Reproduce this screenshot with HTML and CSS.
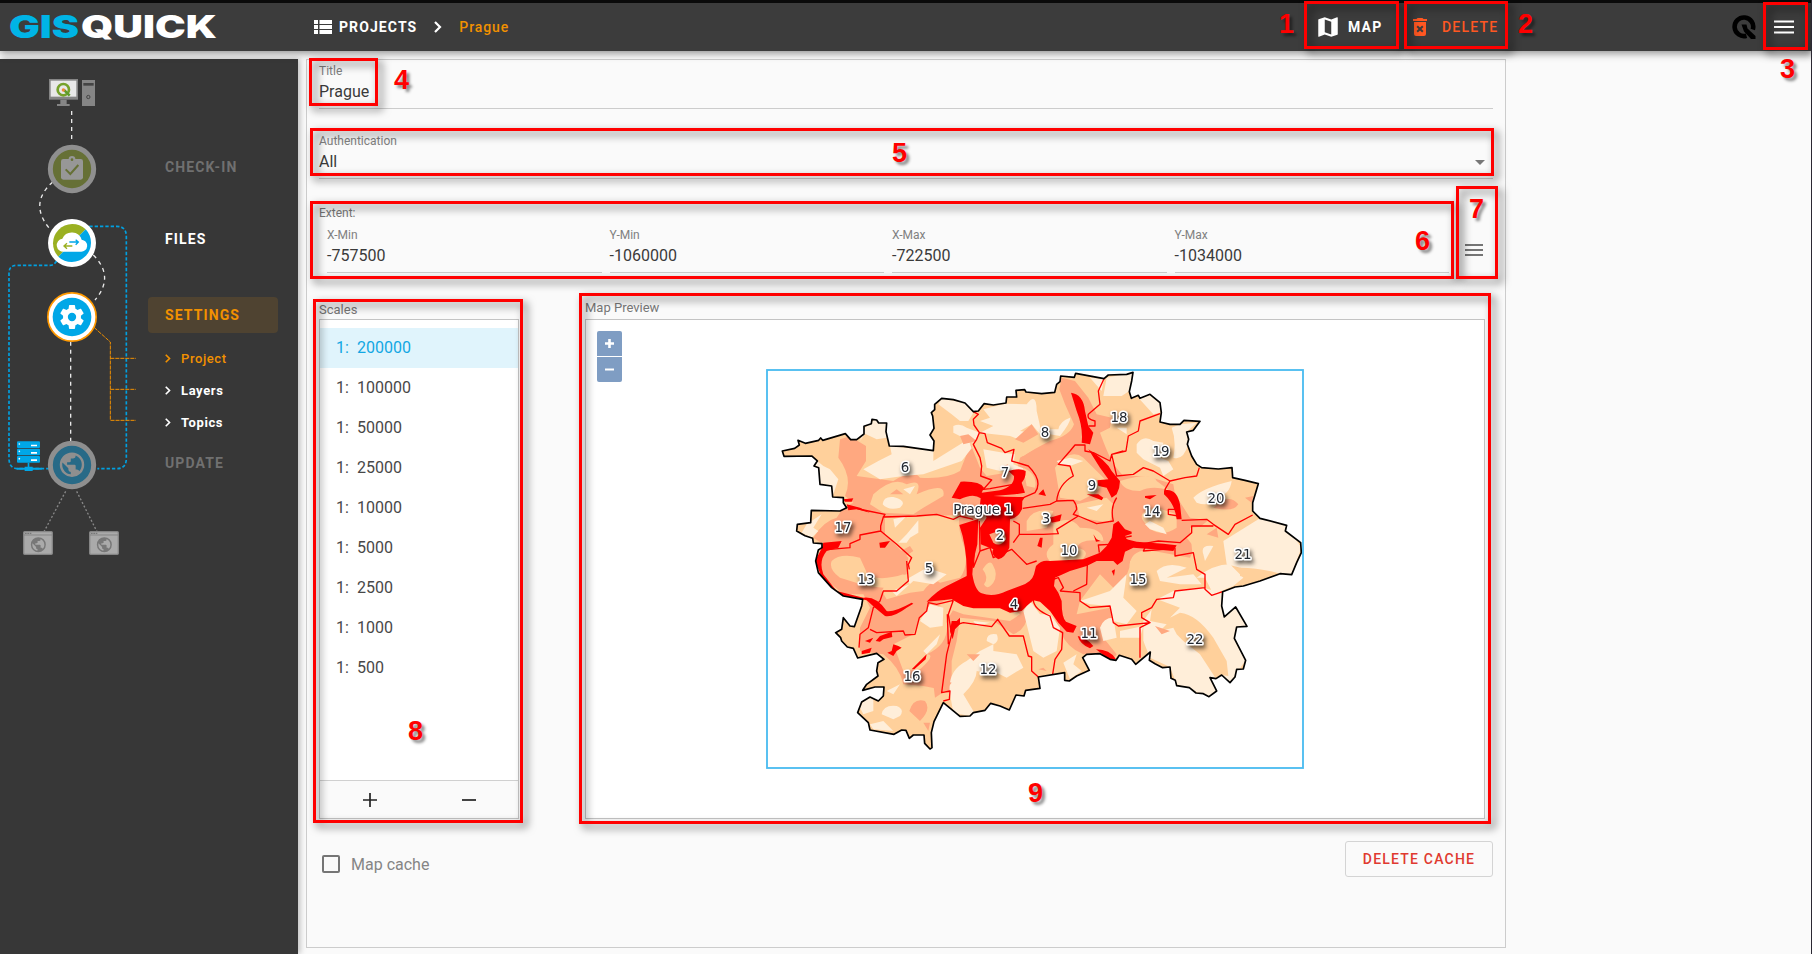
FILE: index.html
```html
<!DOCTYPE html>
<html lang="en">
<head>
<meta charset="utf-8">
<title>Gisquick - Prague</title>
<link rel="stylesheet" href="styles.css">
</head>
<body>
<svg width="0" height="0" class="defs">
  <defs>
    <symbol id="globe" viewBox="0 0 24 24"><path d="M17.9 17.39C17.64 16.59 16.89 16 16 16H15V13A1 1 0 0 0 14 12H8V10H10A1 1 0 0 0 11 9V7H13A2 2 0 0 0 15 5V4.59C17.93 5.77 20 8.64 20 12C20 14.08 19.2 15.97 17.9 17.39M11 19.93C7.05 19.44 4 16.08 4 12C4 11.38 4.08 10.78 4.21 10.21L9 15V16A2 2 0 0 0 11 18M12 2A10 10 0 1 0 12 22A10 10 0 0 0 12 2Z"/></symbol>
    <symbol id="chevron" viewBox="0 0 8 12"><path d="M1 1L6 6L1 11" fill="none" stroke="currentColor" stroke-width="2.2"/></symbol>
  </defs>
</svg>
<header class="topbar">
  <svg class="logo" viewBox="0 0 210 40">
    <text x="-1" y="31" textLength="70" lengthAdjust="spacingAndGlyphs" class="logo-gis">GIS</text>
    <text x="71" y="31" textLength="136" lengthAdjust="spacingAndGlyphs" class="logo-quick">QUICK</text>
  </svg>
  <nav class="crumbs">
    <svg class="list-icon" viewBox="0 0 18 14"><path d="M0 0h4v4H0zM5.500 0H18v4H5.500zM0 5h4v4H0zM5.500 5H18v4H5.500zM0 10h4v4H0zM5.500 10H18v4H5.500z" fill="#fff"/></svg>
    <span class="crumb">PROJECTS</span>
    <svg class="crumb-chev"><use href="#chevron"/></svg>
    <span class="crumb current">Prague</span>
  </nav>
  <div class="actions">
    <a class="action map-action"><svg viewBox="0 0 24 24" width="26" height="26"><path fill="currentColor" fill-rule="evenodd" d="M15 19L9 16.890V5L15 7.110M20.500 3C20.440 3 20.390 3 20.340 3L15 5.100L9 3L3.360 4.900C3.150 4.970 3 5.150 3 5.380V20.500A.5.5 0 0 0 3.500 21C3.550 21 3.610 21 3.660 20.970L9 18.900L15 21L20.640 19.100C20.850 19 21 18.850 21 18.620V3.500A.5.5 0 0 0 20.500 3Z"/></svg>MAP</a>
    <a class="action delete-action"><svg viewBox="0 0 24 24" width="24" height="24"><path fill="currentColor" fill-rule="evenodd" d="M6 19A2 2 0 0 0 8 21H16A2 2 0 0 0 18 19V7H6V19M8.460 11.880L9.870 10.470L12 12.590L14.120 10.470L15.530 11.880L13.410 14L15.530 16.120L14.120 17.530L12 15.410L9.880 17.530L8.470 16.120L10.590 14L8.460 11.880M15.500 4L14.500 3H9.500L8.500 4H5V6H19V4H15.500Z"/></svg>DELETE</a>
  </div>
  <svg class="q-icon" viewBox="0 0 24 24"><path fill="none" stroke="#000" stroke-width="4.600" d="M14.500 20.700A9.300 9.300 0 1 1 20.800 14.500"/><path d="M9.500 9.500h5l1 4L23.500 21v3h-4.500L12 16.500z"/></svg>
  <svg class="burger" viewBox="0 0 20 14"><path d="M0 1.500h20M0 7h20M0 12.500h20" stroke="#fff" stroke-width="2"/></svg>
</header>

<div class="body">
  <aside class="sidebar">
    <svg class="flow" viewBox="0 -3 432 840">
      <g class="pc">
        <path d="M147 57h87v62H147" fill="#858585"/><path d="M152 62h77v48H152z" fill="#e8e8e8"/>
        <path d="M181 119h19v13h9v6h-38v-6h10z" fill="#858585"/><path d="M246 60h39v78h-39z" fill="#858585"/>
        <path d="M250 69h31v8h-31z" fill="#444"/><circle cx="265" cy="111" r="5" fill="none" stroke="#444" stroke-width="3"/>
        <circle cx="190" cy="89" r="17" fill="none" stroke="#75a12b" stroke-width="8"/><path d="M191 89l18 18" stroke="#5f9b2d" stroke-width="8"/><circle cx="190" cy="90" r="5" fill="#f08a35"/>
      </g>
      <g class="wire white"><path d="M215 153V245M158 366Q86 430 148 505M280 585Q345 650 285 720M212 845V1150"/></g>
      <g class="wire blue"><path d="M268 499H350Q379 499 379 530V1195Q379 1226 350 1226H292M170 603Q162 616 150 616H50Q27 616 27 640V1195Q27 1226 55 1226H148"/></g>
      <g class="wire orange"><path d="M283 803L331 846V1081H408M331 895H408M331 988H408" /></g>
      <g class="wire gray"><path d="M197 1294L132 1415M230 1294L291 1415"/></g>
      <circle cx="216" cy="327" r="65" fill="#667036" stroke="#8f8f8f" stroke-width="15"/>
      <rect x="183" y="297" width="66" height="62" rx="7" fill="#979797"/><circle cx="216" cy="298" r="10" fill="#979797"/><circle cx="216" cy="299" r="4" fill="#667036"/>
      <path d="M197 328l14 14 24-27" fill="none" stroke="#667036" stroke-width="6"/>
      <circle cx="216" cy="549" r="72" fill="#fff"/><path d="M175 590A58 58 0 0 1 257 508z" fill="#9ab021"/><path d="M257 508A58 58 0 0 1 175 590z" fill="#00a7e7"/>
      <path d="M193 575a18 18 0 0 1-6-39a31 31 0 0 1 58 3a18 18 0 0 1-3 36z" fill="#fff"/>
      <path d="M208 546h26M227 539l8 7-8 8" fill="none" stroke="#00a7e7" stroke-width="4"/><path d="M193 558h24M201 550l-9 8 9 8" fill="none" stroke="#9ab021" stroke-width="4"/>
      <circle cx="216" cy="771" r="72.500" fill="#fff" stroke="#f90" stroke-width="5"/><circle cx="216" cy="771" r="58" fill="#00a7e7"/>
      <svg x="173" y="728" width="86" height="86" viewBox="0 0 24 24"><path fill="#fff" d="M12 15.500A3.500 3.500 0 1 1 12 8.500A3.500 3.500 0 0 1 12 15.500M19.430 12.970C19.470 12.650 19.500 12.330 19.500 12C19.500 11.670 19.470 11.340 19.430 11L21.540 9.370C21.730 9.220 21.780 8.950 21.660 8.730L19.660 5.270C19.540 5.050 19.270 4.960 19.050 5.050L16.560 6.050C16.040 5.660 15.500 5.320 14.870 5.070L14.500 2.420C14.460 2.180 14.250 2 14 2H10C9.750 2 9.540 2.180 9.500 2.420L9.130 5.070C8.500 5.320 7.960 5.660 7.440 6.050L4.950 5.050C4.730 4.960 4.460 5.050 4.340 5.270L2.340 8.730C2.210 8.950 2.270 9.220 2.460 9.370L4.570 11C4.530 11.340 4.500 11.670 4.500 12C4.500 12.330 4.530 12.650 4.570 12.970L2.460 14.630C2.270 14.780 2.210 15.050 2.340 15.270L4.340 18.730C4.460 18.950 4.730 19.030 4.950 18.950L7.440 17.940C7.960 18.340 8.500 18.680 9.130 18.930L9.500 21.580C9.540 21.820 9.750 22 10 22H14C14.250 22 14.460 21.820 14.500 21.580L14.870 18.930C15.500 18.670 16.040 18.340 16.560 17.940L19.050 18.950C19.270 19.030 19.540 18.950 19.660 18.730L21.660 15.270C21.780 15.050 21.730 14.780 21.540 14.630L19.430 12.970Z"/></svg>
      <circle cx="216" cy="1215" r="65" fill="#286a87" stroke="#8f8f8f" stroke-width="15"/><use href="#globe" x="172" y="1170" width="88" height="88" fill="#8f8f8f"/>
      <g fill="#00a7e7"><rect x="51" y="1144" width="69" height="20" rx="3"/><rect x="51" y="1166" width="69" height="20" rx="3"/><rect x="51" y="1188" width="69" height="20" rx="3"/><path d="M83 1208h5v12h10v3h27v6H98v4H74v-4H50v-6h24v-3h9z"/></g>
      <g fill="#fff"><path d="M93 1154h18v5H93zM93 1176h18v5H93zM93 1198h18v5H93z"/><circle cx="58" cy="1152" r="2.500"/><circle cx="58" cy="1174" r="2.500"/><circle cx="58" cy="1196" r="2.500"/></g>
      <g id="site"><rect x="71" y="1415" width="86" height="68" rx="3" fill="#aaa" stroke="#858585" stroke-width="4"/><path d="M71 1425H157" stroke="#858585" stroke-width="3"/><path d="M75 1420h20" stroke="#777" stroke-width="4" stroke-dasharray="5 2"/><use href="#globe" x="88" y="1427" width="54" height="54" fill="#777"/></g>
      <use href="#site" x="198"/>
    </svg>
    <ul class="steps">
      <li class="step dim">CHECK-IN</li>
      <li class="step">FILES</li>
      <li class="step active">SETTINGS</li>
      <li class="sub active-sub"><svg><use href="#chevron"/></svg>Project</li>
      <li class="sub"><svg><use href="#chevron"/></svg>Layers</li>
      <li class="sub"><svg><use href="#chevron"/></svg>Topics</li>
      <li class="step dim last">UPDATE</li>
    </ul>
  </aside>

  <main class="card">
    <div class="field title-field"><label>Title</label><div class="value">Prague</div></div>
    <div class="field auth-field"><label>Authentication</label><div class="value">All<i class="caret"></i></div></div>
    <div class="extent-label">Extent:</div>
    <div class="extent">
      <div class="field"><label>X-Min</label><div class="value">-757500</div></div>
      <div class="field"><label>Y-Min</label><div class="value">-1060000</div></div>
      <div class="field"><label>X-Max</label><div class="value">-722500</div></div>
      <div class="field"><label>Y-Max</label><div class="value">-1034000</div></div>
      <svg class="extent-menu" viewBox="0 0 18 12"><path d="M0 1h18M0 6h18M0 11h18" stroke="#757575" stroke-width="2"/></svg>
    </div>
    <div class="panels">
      <section class="scales">
        <h3>Scales</h3>
        <div class="scale-box">
          <ul>
            <li class="selected"><b>1:</b>200000</li><li><b>1:</b>100000</li><li><b>1:</b>50000</li><li><b>1:</b>25000</li><li><b>1:</b>10000</li><li><b>1:</b>5000</li><li><b>1:</b>2500</li><li><b>1:</b>1000</li><li><b>1:</b>500</li>
          </ul>
          <div class="scale-tools">
            <svg viewBox="0 0 14 14"><path d="M7 0v14M0 7h14" stroke="#222" stroke-width="1.700"/></svg>
            <svg viewBox="0 0 14 14"><path d="M0 7h14" stroke="#222" stroke-width="1.700"/></svg>
          </div>
        </div>
      </section>
      <section class="preview">
        <h3>Map Preview</h3>
        <div class="map">
          <svg class="map-svg" viewBox="0 0 898 498">
            <defs>
              <path id="city" d="M67 270L104 262 118 252 114 238 136 247 176 238 182 231 188 238 256 218 272 236 290 236 312 219 312 196 334 188 336 175 350 177 356 186 380 186 378 212 388 255 430 256 520 269 522 240 510 222 522 202 518 165 514 155 524 146 524 130 545 112 580 116 615 126 640 152 655 150 672 128 700 132 738 126 740 108 770 108 768 88 794 86 798 93 845 98 884 94 890 70 900 62 902 45 943 49 947 37 1032 53 1045 42 1100 40 1119 34 1115 60 1108 92 1114 112 1135 103 1140 112 1170 100 1200 125 1204 155 1200 183 1230 190 1260 190 1272 178 1320 181 1300 208 1280 213 1286 235 1282 250 1295 285 1310 310 1325 320 1375 324 1416 320 1418 350 1455 358 1495 368 1478 425 1478 450 1500 472 1580 493 1576 510 1622 545 1624 575 1610 605 1595 641 1560 638 1500 660 1450 675 1425 678 1388 692 1385 735 1393 768 1427 738 1461 796 1430 798 1423 832 1457 898 1450 924 1430 925 1425 948 1410 965 1385 942 1368 953 1350 950 1370 990 1347 1007 1330 998 1308 996 1288 980 1250 974 1246 958 1233 952 1230 918 1208 920 1185 908 1168 898 1171 873 1127 910 1115 895 1078 883 1068 898 1050 895 1020 878 980 880 968 890 988 928 950 945 928 960 914 958 914 935 835 948 840 982 797 988 792 1005 768 1002 748 1047 720 1035 692 1027 675 1048 640 1055 630 1065 600 1066 550 1025 522 1082 514 1115 516 1160 510 1164 494 1147 492 1122 460 1122 448 1132 438 1108 425 1107 402 1120 330 1107 325 1085 293 1055 305 1023 330 1008 355 1020 370 1005 372 978 345 978 308 988 320 970 354 945 350 930 354 905 372 895 350 877 293 891 280 862 262 858 245 840 242 830 227 815 245 805 250 770 270 795 283 797 305 735 308 715 250 705 215 680 175 635 167 600 175 567 186 560 186 548 160 546 158 532 135 524 110 510 112 490 152 485 154 448 240 450 260 440 250 425 250 410 218 408 215 375 180 370 176 320 162 315 172 300 155 285 72 286Z"/>
              <clipPath id="cityclip"><use href="#city"/></clipPath>
            </defs>
            <g transform="translate(174 41) scale(.33333)">
              <g clip-path="url(#cityclip)">
                <use href="#city" class="base"/>
                <path class="mid" d="M600 330L632 250 660 320 680 345 770 330 780 290Q830 260 870 240Q930 225 942 190L915 130 898 85 905 50 945 60 985 110 1010 160 1055 170 1050 200 1020 215Q1040 270 1060 310L1090 345 1160 345 1240 370 1245 400 1290 470 1345 478 1280 530 1304 560 1290 590 1180 570Q1110 560 1108 620L1080 700 1060 680 1020 640 960 720 950 760 1050 740 1060 800Q1020 810 1030 830L1070 880 1060 895 1010 875 970 880Q920 860 900 810L870 740 840 700 820 720 800 740Q810 800 760 820L700 780 600 770 590 840 575 900 575 1000 540 985 490 975 430 970Q420 920 370 880L300 870 300 800 330 740 310 700 250 700 180 640 180 590 190 550 160 530Q190 480 230 470L250 440 280 425 255 405Q280 350 235 290L240 235 270 226 318 255 318 300 290 345 400 360Q460 320 480 350Q560 355 600 330Z"/>
                <path class="base" d="M375 470L600 462Q590 490 610 550Q630 610 600 650L540 665Q520 650 490 690L450 695 380 715 365 690 390 650 440 640 445 590 375 520ZM215 600Q240 575 300 590L325 645Q370 660 430 640L440 670 370 680 320 675 240 650Q205 625 215 600ZM340 400Q400 345 440 370Q490 350 470 400Q560 360 550 405L490 440 460 460 370 455 330 430ZM540 735L583 740 560 780Q570 850 500 880Q530 880 480 925L430 930 400 850 460 820 480 770ZM885 320Q930 260 970 290L1010 330 1040 360 1000 400 960 420 900 410ZM950 430L1040 410 1060 430 1050 485 960 470ZM1080 360Q1180 330 1190 360L1230 390Q1180 370 1140 390Q1090 390 1080 360ZM1150 480Q1130 450 1190 440L1250 460 1250 500Q1190 540 1150 480ZM880 490Q930 460 960 500Q1030 500 1030 540Q960 530 950 560Q1000 570 960 600L880 610Q840 580 880 550ZM800 480Q820 440 880 450L860 500 800 510ZM1110 600Q1180 590 1250 610L1300 640 1180 680 1110 620ZM745 270Q800 250 850 245L790 285ZM530 730L600 700 730 720 780 760 750 780 610 760ZM1265 430Q1290 370 1340 390Q1410 370 1415 390L1360 440 1310 460ZM1410 400L1475 410 1460 470 1400 520 1345 495 1370 460ZM1290 500L1350 495 1400 530 1410 620 1325 660 1300 610Z"/>
                <path class="light" d="M140 490L185 460 160 500 175 510 155 530 125 515ZM160 290L190 315 210 325 235 355 220 400 210 375 180 370ZM300 240L315 200 345 175 380 186 380 230 350 235 315 218ZM390 255L520 269 520 300 625 235 635 262 605 300 490 340 430 345 360 355 310 325 355 300 395 280ZM545 112L615 126 640 155 625 180 600 180 575 160 535 130ZM580 195Q600 185 620 200L660 215 640 245 580 215ZM670 145L735 128 800 130Q830 90 830 150Q840 190 845 225L815 190 780 210 820 215 790 240 750 225 660 215 700 195 660 180 690 170ZM670 265L730 275 765 280 760 310 790 322 790 330 720 330 680 320ZM368 430Q370 405 400 408Q445 420 420 440Q385 450 368 430ZM430 385L465 375 450 400ZM415 545L440 520 475 478 475 515 450 530 440 545ZM400 475L440 465 405 500ZM395 690L450 670 440 655 500 620 560 640 520 670 460 660 410 705ZM510 730L550 740 548 795 510 800 480 780ZM490 870L540 820 530 850 500 880ZM300 1040Q310 1010 340 1010L340 1050 310 1060ZM365 1060Q370 1030 410 1035Q435 1045 420 1065L400 1075ZM330 1090L370 1080 400 1110 340 1105ZM380 990L420 970 400 1000ZM580 1055L570 1000Q560 930 620 900L660 870 700 850 700 870 770 880 790 920 740 950 700 930 660 950Q600 1010 660 1030L630 1065ZM790 750L810 720 840 760 870 760 900 800 890 870 850 890 820 870ZM680 840Q680 815 710 820Q720 840 700 850ZM640 780L690 785 650 795ZM910 905L950 880 940 910 965 930 930 955 920 930ZM990 50L1032 54 1025 90ZM1030 105L1040 50 1119 34 1108 90 1085 105ZM1135 110L1170 100 1200 128 1200 155 1180 160ZM1070 200L1100 200 1100 220ZM1130 250Q1150 220 1180 240L1210 245 1200 290 1225 300 1240 325 1210 345 1200 320 1150 295 1130 275ZM1235 200L1260 190 1310 185 1280 213 1285 250Q1270 300 1240 290Q1250 240 1235 200ZM1300 410Q1330 380 1415 360Q1410 400 1370 410Q1350 440 1310 425ZM870 220L900 225Q935 180 930 170Q900 180 895 205L870 205ZM890 300L930 290 970 300 930 315 900 310ZM980 440L1030 430 1010 450ZM1155 490L1170 480 1210 500 1220 520 1170 505ZM1390 540L1500 472 1580 493 1624 560 1595 641 1500 660 1480 630 1400 610ZM1310 650Q1360 610 1410 610L1450 650 1420 675 1360 700 1335 650ZM1330 580Q1320 550 1360 555L1335 600ZM960 720L1050 690 1100 640 1090 710 1130 750 1100 790 1060 780 1050 735 990 730ZM1190 630Q1220 600 1280 620L1220 650 1300 640 1325 670 1260 670 1200 660ZM1150 780L1200 710 1240 690 1330 680 1385 695 1393 768 1427 738 1461 796 1425 830 1457 898 1410 965 1350 950 1370 990 1347 1007 1250 970 1230 918 1170 890 1150 840ZM1020 800Q1030 770 1060 770L1070 830 1030 840ZM1080 810L1150 795 1140 830 1080 830Z"/>
                <path class="base" d="M1180 710L1260 740 1230 770 1260 755Q1310 760 1360 830L1400 900 1405 945 1385 942 1368 953 1320 880 1270 840 1250 820 1240 800 1200 810 1220 790 1170 780ZM1440 620Q1500 620 1560 638L1500 660 1440 645ZM610 1000Q650 960 650 930L700 940 760 960 790 970 770 1000 740 1040 640 1050ZM1100 835L1150 840 1150 880 1110 885 1080 850ZM400 1080L500 1050 490 1120 420 1105ZM790 320Q835 340 825 380L800 375Z"/>
                <path class="mid" d="M448 1050Q460 1010 495 1020Q515 1045 480 1080ZM1185 795L1230 810 1205 820ZM835 925L850 920 860 930ZM520 970L545 955 575 965 555 990 525 1010ZM490 1085L510 1085 505 1110ZM1340 520L1370 500 1375 530ZM1380 425Q1410 400 1435 430Q1420 455 1360 440ZM1455 410L1480 405 1475 425ZM390 400L410 385 430 400ZM405 580L450 555 460 570 430 590ZM600 225L625 220 650 240 610 250ZM620 880L660 880 640 900ZM745 310L720 318 735 325ZM765 235L815 190 835 220 790 245Z"/>
                <path class="red" d="M575 410L602 362Q660 360 672 380L665 395 720 388Q765 375 762 345L745 330Q780 320 797 330Q798 350 785 365Q790 380 795 395L765 400 700 405 760 410 795 408 787 420 786 445Q775 470 750 475L748 560Q735 590 715 595Q690 580 700 565L662 550 660 500 680 470 660 430 662 412Q640 395 600 415Z"/>
                <path class="red" d="M598 492L655 474 652 550 640 600 637 640Q645 690 665 697Q700 710 740 690L780 675Q815 665 822 640L828 615Q845 595 870 600L970 595 1020 575 1040 555 1055 530 1060 490 1075 480 1095 505 1115 512 1115 518 1095 525 1100 535 1130 542 1210 548 1250 553 1240 570 1180 565 1120 560 1095 572 1088 600 1072 612 1060 600 1010 600 980 615 930 630 885 650 882 675 895 695 905 720Q905 770 918 782L950 795 940 815 920 812 895 785 870 750 840 722 820 718 800 735 785 750 750 755 720 742 640 742 610 735 575 715 500 722Q530 690 560 675L620 645Q622 560 598 492Z"/>
                <path class="red" d="M186 560L190 545 245 540 235 560 200 570Q175 600 190 640L230 690 310 710Q350 705 380 750Q400 755 455 725L460 728 440 740Q400 770 375 765L345 740 320 718 250 705 190 660 165 600ZM933 95Q970 100 975 150L985 195 1000 215 990 250 965 245Q970 200 950 150ZM985 265Q1040 300 1055 330L1080 360Q1080 380 1070 400L1055 410 1040 380 1015 375 1012 358 1045 355 1020 320ZM980 400L1015 400 1030 410 1025 418ZM1212 388Q1250 380 1260 430L1265 475 1250 475Q1245 430 1212 400ZM1155 405L1190 402 1170 415 1155 410ZM455 925L500 880 497 895 463 925ZM382 875L395 870 400 850 415 855 425 860 410 870 400 885ZM347 840L360 825 395 812 397 828 370 835 360 842ZM305 870L335 860 330 875 305 880ZM315 840L340 830 330 845ZM575 780L590 780 600 770 600 790 585 805 578 835 570 810ZM840 530L848 530 845 560 832 555ZM1000 520L1010 535 1022 540 1008 542ZM250 415L280 412 275 422 255 422ZM260 430L300 440 330 455 290 445 265 448ZM358 545L390 540 375 560 360 560ZM870 470L905 460 900 480 875 485ZM953 825Q980 830 1000 855L990 862Q960 850 953 825ZM1008 865Q1050 865 1068 895L1050 898ZM835 400L850 385 858 405ZM1055 630L1065 625 1062 645Z"/>
                <path class="mid" d="M688 520Q720 505 735 520L738 535Q720 560 700 545Z"/>
                <path class="base" d="M668 625Q690 590 700 615Q715 640 700 665Q680 690 672 670Q688 650 668 625Z"/>
                <path class="bound" d="M640 152L655 160 640 175 642 192 658 215 650 235 640 250 660 290 665 315 662 345 695 357 670 385 690 383 760 370M658 215L675 218 682 245 725 262 735 275 762 265 755 300 805 315Q850 360 825 395L790 410 670 408M280 440L325 450 375 460 370 468 470 465 530 460 580 475 600 465 640 475M370 468L362 495 362 510 300 522 300 535 270 548 270 560 210 565M362 510L410 550 455 590 445 610 448 625M440 600L445 660 410 690 370 690 360 720 340 740 325 800 300 820 297 860M330 805L350 815 430 810 435 822 465 820 478 770 500 750 505 725 530 730 580 718M580 718L565 760 575 820 560 880 545 995 570 990 568 1015 550 1020M565 850L562 760M575 795L610 785 695 797 713 775 748 825 790 825 805 885 815 888 815 930 835 948M648 480L640 620M658 480L660 570 640 620M660 570L690 560 700 590 755 565 800 610 830 600M760 480L778 490 778 520 850 520 895 518 890 505 955 465M760 545L778 520M788 442L870 430 890 420 940 418Q950 430 950 445L940 460 955 465 1010 488 1060 480Q1050 440 1070 410M890 420Q895 370 940 345L930 315 895 310 930 270 945 252 975 252 975 270 1000 275 1050 300 1055 280 1090 270M1032 53L1015 90 1020 130 985 160Q980 175 1005 180L1005 195 985 195M1200 158L1140 180 1135 210 1105 225 1098 270 1055 280 1070 345 1120 340 1150 320 1180 330 1230 360 1275 350 1310 345 1318 320M1230 360L1215 385 1225 400M1265 478L1340 475 1360 490 1405 520 1425 490 1478 462M1360 495L1295 495 1295 515 1260 545 1195 540 1150 548M1245 560L1245 585 1300 575 1310 625 1335 640 1335 685 1355 703 1388 692M1335 680L1245 690 1240 710 1190 715 1175 740 1145 755 1145 770 1170 785 1140 800 1140 890M1170 785L1075 795 1060 785 1050 735 990 740 960 720 960 695 900 690M982 610L980 670 940 690M820 715Q820 745 870 765L880 800 908 815 905 865 885 895 878 940M1115 525L1090 530 1105 540M1155 560L1150 570 1210 565M1255 445L1225 445 1225 460 1255 465M1050 550L1015 552 1018 575M880 655L895 650 910 680 900 690"/>
              </g>
              <use href="#city" class="outline"/>
              <rect class="extent-rect" x="21" y="27" width="1608" height="1194"/>
            </g>
            <g class="map-labels" transform="translate(-586 -319)">
              <text x="905" y="471">6</text><text x="1005" y="476">7</text><text x="1045" y="436">8</text><text x="1119" y="421">18</text><text x="1161" y="455">19</text><text x="1092" y="489">9</text><text x="1216" y="502">20</text><text x="1152" y="515">14</text><text x="1046" y="522">3</text><text x="983" y="512.500">Prague 1</text><text x="1000" y="539">2</text><text x="843" y="531">17</text><text x="1069" y="554">10</text><text x="1243" y="558">21</text><text x="929" y="572">5</text><text x="866" y="583">13</text><text x="1138" y="583">15</text><text x="1014" y="608">4</text><text x="1089" y="637">11</text><text x="1195" y="643">22</text><text x="912" y="680">16</text><text x="988" y="673">12</text>
            </g>
          </svg>
          <div class="zoom-ctl"><span><svg viewBox="0 0 9 9"><path d="M4.500 0v9M0 4.500h9" stroke="#fff" stroke-width="2.600"/></svg></span><span><svg viewBox="0 0 9 9"><path d="M0 4.500h9" stroke="#fff" stroke-width="2"/></svg></span></div>
        </div>
      </section>
    </div>
    <div class="footer"><span class="cache"><i></i>Map cache</span><button>DELETE CACHE</button></div>
  </main>
</div>

<div class="notes">
  <i class="box b1"></i><i class="box b2"></i><i class="box b3"></i><i class="box b4"></i><i class="box b5"></i><i class="box b6"></i><i class="box b7"></i><i class="box b8"></i><i class="box b9"></i>
  <span class="n n1">1</span><span class="n n2">2</span><span class="n n3">3</span><span class="n n4">4</span><span class="n n5">5</span><span class="n n6">6</span><span class="n n7">7</span><span class="n n8">8</span><span class="n n9">9</span>
</div>
</body>
</html>
```
FILE: styles.css
```css
* { box-sizing: border-box; }
body { margin: 0; width: 1812px; height: 954px; overflow: hidden; background: #fafafa; font-family: Roboto, sans-serif; color: #333; position: relative; display: flex; flex-direction: column; border-right: 1px solid #2b2833; }
.defs { position: absolute; }
ul { list-style: none; margin: 0; padding: 0; }

.topbar { height: 51px; flex: none; background: #3c3c3c; border-top: 3px solid #0a0a0a; display: flex; align-items: center; box-shadow: 0 2px 8px rgba(0,0,0,.45); position: relative; padding: 0 17px 8px 10px; }
.logo { width: 210px; height: 40px; margin-top: 7px; overflow: visible; }
.logo text { font-family: Inter, sans-serif; font-weight: 900; font-size: 31px; }
.logo-gis { fill: #00b4e6; }
.logo-quick { fill: #fff; }
.crumbs { display: flex; align-items: center; margin-left: 93px; font-size: 14px; font-weight: 700; letter-spacing: 1.1px; color: #fff; width: 1002px; padding-top: 8px; }
.list-icon { width: 18px; height: 14px; margin: 0 7px 0 1px; }
.crumb-chev { width: 8px; height: 12px; margin: 0 17px 0 17px; }
.current { color: #f29100; font-weight: 500; letter-spacing: .9px; }
.actions { display: flex; padding-top: 8px; }
.action { display: flex; align-items: center; font-size: 14px; font-weight: 500; letter-spacing: 1.2px; }
.map-action { color: #fff; width: 93px; gap: 7px; font-weight: 700; }
.delete-action { color: #ff5722; gap: 10px; width: 100px; }
.q-icon { width: 24px; height: 24px; margin: 8px 18px 0 auto; }
.burger { width: 20px; height: 14px; margin-top: 8px; }

.body { display: flex; flex: 1; padding: 8px 0 7px; }
.sidebar { width: 298px; height: 895px; flex: none; background: #373737; display: flex; box-shadow: 2px 0 6px rgba(0,0,0,.25); }
.flow { width: 144px; height: 280px; overflow: visible; flex: none; }
.wire { fill: none; stroke-width: 4; }
.wire.white { stroke: #e8e8e8; stroke-dasharray: 12 12; }
.wire.blue { stroke: #00a0e0; stroke-width: 5; stroke-dasharray: 10 6; }
.wire.orange { stroke: #f29100; stroke-width: 3; stroke-dasharray: 12 3; }
.wire.gray { stroke: #888; stroke-dasharray: 6 6; }
.steps { padding: 90px 0 0 4px; width: 134px; color: #fff; font-weight: 700; letter-spacing: 1.1px; }
.step { font-size: 14px; height: 36px; line-height: 36px; padding-left: 17px; margin-bottom: 36px; }
.step.dim { color: #707070; }
.step.active { background: #4f4331; color: #f29100; border-radius: 4px; margin: 22px 0 9px; font-weight: 500; }
.steps .active { font-weight: 700; }
.step:nth-child(2) { margin-bottom: 40px; }
.sub { display: flex; align-items: center; height: 32px; padding-left: 17px; font-size: 13px; letter-spacing: .6px; }
.sub svg { width: 6px; height: 9px; margin-right: 10px; color: inherit; }
.active-sub { color: #f29100; font-weight: 500; }
.last { margin-top: 7px; }

.card { width: 1200px; height: 889px; margin-left: 8px; border: 1px solid #ccc; padding: 0 12px 0 12px; }
.field label { display: block; font-size: 12px; line-height: 16px; color: #808080; }
.field .value { font-size: 16px; line-height: 26px; height: 30px; border-bottom: 1px solid #ccc; color: #3a3a3a; font-weight: 400; position: relative; }
.title-field { padding-top: 3px; }
.auth-field { margin-top: 24px; }
.caret { position: absolute; right: 8px; top: 11px; border: 5px solid transparent; border-top-color: #777; border-bottom: 0; }
.extent-label { font-size: 12px; line-height: 16px; color: #777; margin-top: 26px; }
.extent { display: flex; gap: 8px; padding-left: 8px; margin-top: 6px; }
.extent .field { width: 274.500px; }
.extent-menu { width: 18px; height: 12px; margin: 17px 0 0 8px; }
.panels { display: flex; justify-content: space-between; margin-top: 29px; padding-right: 8px; }
.panels h3 { font-size: 13px; font-weight: 400; color: #777; margin: 0; line-height: 16px; height: 17px; }
.scales { width: 200px; }
.preview { width: 900px; }
.preview h3 { transform: translateY(-2px); }
.scale-box, .map { height: 500px; border: 1px solid #c4c4c4; background: #fff; position: relative; }
.scale-box { display: flex; flex-direction: column; padding-top: 8px; }
.scale-box ul { flex: 1; }
.scale-box li { height: 40px; line-height: 39px; font-size: 16px; padding-left: 16px; color: #484848; }
.scale-box b { font-weight: 400; display: inline-block; width: 21px; }
.scale-box .selected { background: #e0f4fc; color: #12a7e3; }
.scale-tools { height: 38px; border-top: 1px solid #d0d0d0; background: #fafafa; display: flex; justify-content: space-around; align-items: center; }
.scale-tools svg { width: 14px; height: 14px; }
.map-svg { display: block; width: 898px; height: 498px; }
.base { fill: #ffd09b; }
.mid { fill: #ffa880; }
.light { fill: #ffeed9; stroke: none; }
.red { fill: #f00; }
.bound { fill: none; stroke: #f00; stroke-width: 4; stroke-linejoin: round; }
.outline { fill: none; stroke: #000; stroke-width: 5; stroke-linejoin: round; }
.extent-rect { fill: none; stroke: #4bbcf0; stroke-width: 5.500; }
.map-labels text { font: 13.400px "DejaVu Sans", sans-serif; text-anchor: middle; fill: #222831; stroke: #fff; stroke-width: 3.200px; stroke-linejoin: round; paint-order: stroke; filter: drop-shadow(2px 3px 2px rgba(0,0,0,.6)); }
.zoom-ctl { position: absolute; left: 11px; top: 11px; display: flex; flex-direction: column; gap: 1px; }
.zoom-ctl span { width: 25px; height: 25px; background: #7f9dc3; display: flex; align-items: center; justify-content: center; border-radius: 2px 2px 0 0; }
.zoom-ctl span + span { border-radius: 0 0 2px 2px; }
.zoom-ctl svg { width: 9px; height: 9px; }
.footer { display: flex; justify-content: space-between; padding: 22px 0 0 3px; }
.cache { display: flex; align-items: center; font-size: 16px; color: #858585; gap: 11px; height: 46px; }
.cache i { width: 18px; height: 18px; border: 2px solid #757575; border-radius: 2px; }
.footer button { width: 148px; height: 36px; border: 1px solid #d4d4d4; border-radius: 3px; background: transparent; color: #e03a30; font: 500 14px Roboto, sans-serif; letter-spacing: 1.2px; padding: 0; }

.notes { position: absolute; inset: 0; }
.box { position: absolute; border: 3px solid #f00; filter: drop-shadow(4px 4px 4px rgba(0,0,0,.6)); }
.b1 { left: 1304px; top: 1px; width: 95px; height: 48px; }
.b2 { left: 1404px; top: 1px; width: 104px; height: 48px; }
.b3 { left: 1763px; top: 2px; width: 45px; height: 48px; }
.b4 { left: 309px; top: 58px; width: 69px; height: 48px; }
.b5 { left: 310px; top: 128px; width: 1184px; height: 48px; }
.b6 { left: 310px; top: 201px; width: 1144px; height: 78px; }
.b7 { left: 1456px; top: 186px; width: 42px; height: 93px; }
.b8 { left: 313px; top: 299px; width: 210px; height: 524px; }
.b9 { left: 579px; top: 293px; width: 912px; height: 531px; }
.n { position: absolute; font: bold 27px/27px "Liberation Sans", Arial, sans-serif; color: #f00; text-shadow: 3px 3px 3px rgba(0,0,0,.45); }
.n1 { left: 1279px; top: 11px; }
.n2 { left: 1518px; top: 11px; }
.n3 { left: 1780px; top: 56px; }
.n4 { left: 394px; top: 67px; }
.n5 { left: 892px; top: 140px; }
.n6 { left: 1415px; top: 228px; }
.n7 { left: 1469px; top: 196px; }
.n8 { left: 408px; top: 718px; }
.n9 { left: 1028px; top: 780px; }
```
